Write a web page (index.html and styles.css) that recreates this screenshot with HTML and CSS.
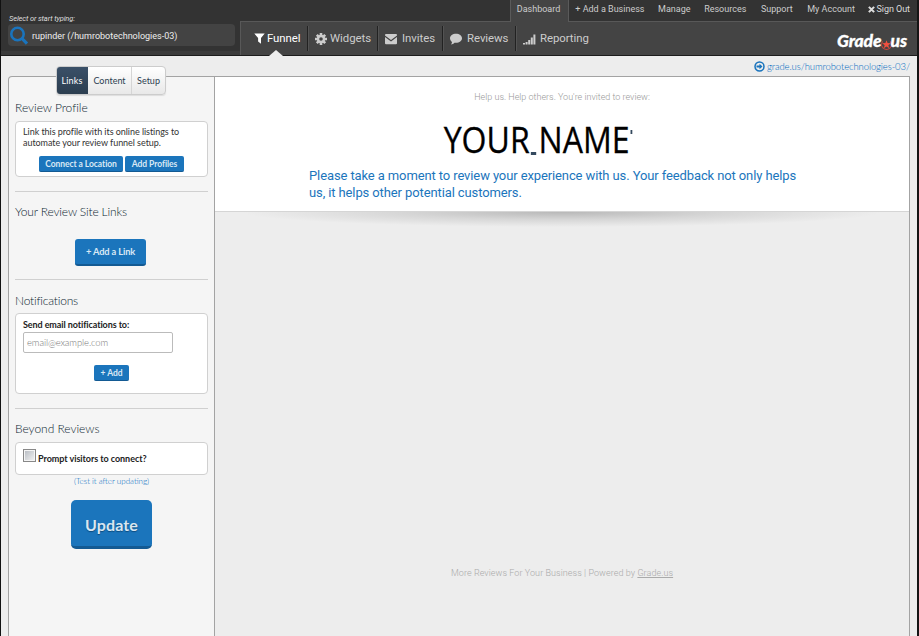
FILE: index.html
```html
<!DOCTYPE html>
<html lang="en">
<head>
<meta charset="utf-8">
<title>Grade.us</title>
<link rel="stylesheet" href="styles.css">
</head>
<body>
<div class="app">
  <header class="header">
    <div class="finder">
      <label class="finder-label" for="profile">Select or start typing:</label>
      <div class="finder-box" id="profile">
        <svg class="search" viewBox="0 0 20 20"><circle cx="8.5" cy="8" r="6.2" fill="none" stroke="#1a74bd" stroke-width="2.6"/><path d="M13 12.5l5 5.2" stroke="#1a74bd" stroke-width="3.2"/></svg>
        <span class="finder-text">rupinder (/humrobotechnologies-03)</span>
      </div>
    </div>
    <div class="bars">
      <nav class="topnav">
        <a class="current"><span>Dashboard</span></a>
        <a><span>+ Add a Business</span></a>
        <a><span>Manage</span></a>
        <a><span>Resources</span></a>
        <a><span>Support</span></a>
        <a><span>My Account</span></a>
        <a class="out"><svg viewBox="0 0 8 8"><path d="M1 1l6 6M7 1L1 7" stroke="#ddd" stroke-width="2.4"/></svg><span>Sign Out</span></a>
      </nav>
      <div class="mainbar">
        <nav class="tabs">
          <a class="tab funnel active"><svg viewBox="0 0 11 11"><path fill="#fff" d="M.3.5h10.4L7 5v5.8L4.1 8.4V5z"/></svg><span>Funnel</span></a>
          <a class="tab widgets"><svg viewBox="0 0 12 12"><g stroke="#ccc" stroke-width="2.6"><path d="M6 0v12M0 6h12M1.8 1.8l8.4 8.4M10.2 1.8l-8.4 8.4"/></g><circle cx="6" cy="6" r="4.2" fill="#ccc"/><circle cx="6" cy="6" r="1.8" fill="#444"/></svg><span>Widgets</span></a>
          <a class="tab invites"><svg viewBox="0 0 12 11"><path fill="#ccc" d="M1 .5h10q1 0 1 1v.6L6 6.4 0 2.1v-.6q0-1 1-1zM0 3.6l6 4.3 6-4.3v6.2q0 1-1 1H1q-1 0-1-1z"/></svg><span>Invites</span></a>
          <a class="tab reviews"><svg viewBox="0 0 12 12"><path fill="#ccc" d="M6 .8c3.400 0 6 2 6 4.500S9.400 9.800 6 9.800c-.6 0-1 0-1.500-.1C3.600 10.700 2.400 11.300 1 11.400c.6-.7 1-1.500 1-2.500C.8 8.100 0 6.800 0 5.300 0 2.800 2.600.8 6 .8z"/></svg><span>Reviews</span></a>
          <a class="tab reporting"><svg viewBox="0 0 13 12"><path fill="#ccc" d="M0 10h2v1.500H0zM2.600 9h2v2.500h-2zM5.200 7h2v4.500h-2zM7.800 4.500h2v7h-2zM10.400 1.500h2v10h-2z"/></svg><span>Reporting</span></a>
        </nav>
        <div class="logo"><span>Grade</span><svg viewBox="0 0 10 12"><path d="M1.500 3.200a4.500 4.500 0 1 0 7 0" fill="none" stroke="#c9473d" stroke-width="1"/><path fill="#f0503f" d="M5 2l1 2.700 3 .1-2.300 1.800.9 2.900L5 7.800 2.400 9.500l.9-2.900L1 4.800l3-.1z"/></svg><span>us</span></div>
      </div>
    </div>
  </header>

  <div class="urlrow"><a class="url"><svg viewBox="0 0 11 11"><circle cx="5.500" cy="5.500" r="4.500" fill="none" stroke="#1a74bd" stroke-width="1.500"/><path d="M2.500 4.600h3V2.700l3 2.800-3 2.800V6.400h-3z" fill="#1a74bd"/></svg><span>grade.us/humrobotechnologies-03/</span></a></div>

  <div class="workspace">
    <aside class="sidebar">
      <div class="switch"><a class="on"><span>Links</span></a><a><span>Content</span></a><a><span>Setup</span></a></div>
      <section class="profile">
        <h2>Review Profile</h2>
        <div class="card">
          <p><span class="l1">Link this profile with its online listings to</span><br><span class="l2">automate your review funnel setup.</span></p>
          <div class="row"><button class="btn connect"><span>Connect a Location</span></button><button class="btn addp"><span>Add Profiles</span></button></div>
        </div>
      </section>
      <section class="sites">
        <h2>Your Review Site Links</h2>
        <button class="btn link"><span>+ Add a Link</span></button>
      </section>
      <section class="notify">
        <h2>Notifications</h2>
        <div class="card">
          <label class="strong">Send email notifications to:</label>
          <div class="input"><span>email@example.com</span></div>
          <button class="btn add"><span>+ Add</span></button>
        </div>
      </section>
      <section class="beyond">
        <h2>Beyond Reviews</h2>
        <div class="card"><i class="check"></i><span class="strong">Prompt visitors to connect?</span></div>
        <a class="test"><span>(Test it after updating)</span></a>
        <button class="btn update"><span>Update</span></button>
      </section>
    </aside>
    <main class="preview">
      <div class="hero">
        <p class="invite"><span>Help us. Help others. You're invited to review:</span></p>
        <h1><span class="name">YOUR<i class="dash"></i>NAME</span><i class="tick"></i></h1>
        <p class="message"><span class="m1">Please take a moment to review your experience with us. Your feedback not only helps</span><br><span class="m2">us, it helps other potential customers.</span></p>
      </div>
      <div class="shade"></div>
      <footer><span>More Reviews For Your Business | Powered by <u>Grade.us</u></span></footer>
    </main>
  </div>
</div>
</body>
</html>
```
FILE: styles.css
```css
* { box-sizing: border-box; }
body { margin: 0; font-family: Roboto, sans-serif; background: #ededed; }
h1, h2, p { margin: 0; font-weight: 400; }
a { color: inherit; text-decoration: none; }
span { white-space: nowrap; }
svg { flex: none; display: block; }
.app { width: 919px; height: 636px; overflow: hidden; border-left: 1px solid #111; border-right: 2px solid #151515; display: flex; flex-direction: column; }

.header { height: 56px; flex: none; display: flex; background: #333; border-bottom: 1px solid #1c1c1c; }
.finder { width: 239px; padding: 13px 0 0 7px; border-bottom: 4px solid #3b3b3b; }
.finder-label { display: block; font-size: 7.500px; line-height: 11px; font-style: italic; color: #ddd; padding-left: 1px; letter-spacing: -.13px; }
.finder-box { width: 227px; height: 22px; background: #434343; border-radius: 4px; display: flex; align-items: center; }
.search { width: 20px; height: 20px; margin: 2px 0 0 1px; }
.finder-text { font-size: 9px; color: #eee; margin: 1px 0 0 3px; }
.bars { flex: 1; display: flex; flex-direction: column; }
.topnav { height: 21px; flex: none; display: flex; justify-content: flex-end; font-size: 9px; color: #ccc; line-height: 18px; padding-right: 7px; gap: 13.600px; }
.topnav .current { background: #444; width: 59px; height: 22px; padding-left: 6px; border: solid #5a5a5a; border-width: 0 1px; margin-right: -7px; z-index: 1; }
.out { display: flex; align-items: center; height: 18px; gap: 2px; color: #ddd; margin-left: -1px; letter-spacing: -.05px; }
.out svg { width: 7px; height: 7px; }
.topnav a:nth-child(5) { margin: 0 1px; }
.mainbar { flex: 1; display: flex; justify-content: space-between; background: #444; border: solid #585858; border-width: 1px 0 0 1px; padding: 4px 10px 0 0; }
.tabs { display: flex; height: 25px; font-size: 11.400px; color: #ccc; }
.tab { display: flex; align-items: center; height: 25px; border-right: 1px solid #222; box-shadow: 1px 0 #535353; position: relative; }
.tab:last-child { border: 0; box-shadow: none; }
.tab span { margin-top: -1px; letter-spacing: -.05px; }
.tab svg { width: 12px; height: 12px; }
.funnel { width: 67px; padding-left: 13px; gap: 2px; color: #fff; }
.tab.funnel svg { width: 11px; height: 11px; }
.widgets { width: 70px; padding-left: 7px; gap: 3px; }
.invites { width: 65px; padding-left: 7px; gap: 5px; }
.reviews { width: 73px; padding-left: 7px; gap: 5px; }
.reporting { width: 80px; padding-left: 7px; gap: 4px; }
.tab.reporting svg { width: 13px; }
.funnel::after { content: ""; position: absolute; left: 28px; top: 24px; border: solid transparent; border-width: 0 7px 6px; border-bottom-color: #ededed; }
.logo { display: flex; align-items: center; height: 28px; font: italic 900 17.500px Lato, sans-serif; color: #fff; letter-spacing: -.1px; -webkit-text-stroke: .3px #fff; }
.logo svg { width: 11px; height: 13px; margin: 8px -1px 0 -1px; }

.urlrow { height: 20px; flex: none; display: flex; justify-content: flex-end; padding: 1px 7px 0 0; }
.url { display: flex; align-items: center; gap: 2px; font: 300 9.500px Lato, sans-serif; letter-spacing: -.09px; color: #0068bd; }
.url svg { width: 11px; height: 11px; }

.workspace { flex: 1; display: flex; margin: 0 7px; min-height: 0; }
.sidebar { width: 207px; flex: none; background: #f5f5f5; border: solid #a3a3a3; border-width: 1px 1px 0 1px; border-radius: 4px 0 0 0; padding: 0 6px; font-family: Lato, sans-serif; color: #222; }
.switch { width: 110px; height: 29px; margin: -11px 0 0 41px; display: flex; position: relative; border: 1px solid #ccc; border-radius: 4px; overflow: hidden; background: linear-gradient(#fff, #e8e8e8); box-shadow: 0 1px 1px #ddd; font-size: 9px; line-height: 28px; color: #2c3e50; text-align: center; }
.switch .on { width: 32px; background: linear-gradient(#3a5068, #2c3e50); color: #fff; margin-left: -1px; letter-spacing: .1px; }
.switch a:nth-child(2) { width: 44px; border-right: 1px solid #d5d5d5; }
.switch a:nth-child(3) { flex: 1; }
section h2 { font-size: 12px; font-weight: 300; line-height: 16px; color: #0c1e30; letter-spacing: -.03px; }
.card { background: #fff; border: 1px solid #d0d0d0; border-radius: 4px; }
.btn { display: block; border: 0; padding: 0; background: #1b75bc; border-bottom: 1px solid #135a93; border-radius: 2px; color: #d9e8f5; font: 700 8.500px Lato, sans-serif; letter-spacing: -.06px; height: 16px; text-align: center; }
.profile { height: 97px; border-bottom: 1px solid #d0d0d0; padding-top: 5px; }
.profile h2 { margin-bottom: 5px; }
.profile .card { height: 56px; padding: 4px 7px; }
.card p { font-size: 9px; line-height: 11px; letter-spacing: -.05px; color: #333; }
.row { display: flex; gap: 2px; margin: 8px 0 0 16px; }
.connect { width: 84px; }
.addp { width: 59px; }
.sites { height: 88px; border-bottom: 1px solid #d0d0d0; padding-top: 12px; }
.sites h2 { letter-spacing: -.15px; }
.btn.link { width: 71px; height: 27px; margin: 19px 0 0 60px; border-radius: 3px; border-bottom-width: 2px; font-size: 9.300px; letter-spacing: -.15px; }
.notify { height: 129px; border-bottom: 1px solid #d0d0d0; padding-top: 13px; }
.notify h2 { margin-bottom: 4px; letter-spacing: -.2px; }
.notify .card { height: 81px; padding: 5px 7px; }
.strong { font-size: 9px; font-weight: 700; line-height: 12px; white-space: nowrap; letter-spacing: -.09px; }
.notify .strong { display: block; }
.input { width: 150px; height: 21px; border: 1px solid #bbb; border-radius: 2px; font-size: 9.500px; font-weight: 300; line-height: 20px; color: #777; padding-left: 3px; margin-top: 1px; letter-spacing: -.1px; }
.btn.add { width: 35px; margin: 12px 0 0 71px; }
.beyond { padding-top: 12px; }
.beyond .card { height: 33px; margin-top: 5px; padding: 6px 7px; display: flex; gap: 2px; }
.beyond .strong { padding-top: 4px; letter-spacing: -.05px; }
.check { width: 13px; height: 13px; border: 1px solid #888; background: linear-gradient(135deg, #b4b9c0, #f5f5f5); box-shadow: inset 0 0 0 1px #f5f5f5; }
.test { display: block; text-align: center; font-size: 8px; font-weight: 300; line-height: 13px; color: #0068bd; }
.btn.update { width: 81px; height: 49px; margin: 12px 0 0 56px; border-radius: 5px; border-bottom-width: 3px; font-size: 16px; padding-top: 2px; color: #d9e6f1; letter-spacing: .1px; text-shadow: 0 1px 1px #0d4d80; }

.preview { flex: 1; border: solid #a3a3a3; border-width: 1px 1px 0 0; display: flex; flex-direction: column; }
.hero { height: 135px; background: #fff; border-bottom: 1px solid #d5d5d5; }
.invite { text-align: center; padding-top: 12px; line-height: 16px; font-size: 9px; font-weight: 300; color: #999; }
h1 { display: flex; justify-content: center; font: 400 36px/42px "Open Sans", sans-serif; color: #000; margin-top: 14px; padding-right: 54px; transform: scaleX(.89); -webkit-text-stroke: .3px #000; }
.name { display: flex; align-items: flex-start; }
.dash { width: 6px; height: 3px; background: #34495e; margin: 33px 3px 0 1px; }
.tick { width: 2px; height: 4px; background: #34495e; margin: 11px 0 0 1px; }
.message { margin: 6px 0 0 94px; font-size: 13px; line-height: 17px; color: #1b75bc; letter-spacing: -.11px; }
.shade { height: 16px; background: radial-gradient(ellipse 46% 15px at 50% 0, #b8b8b8, #d6d6d6 50%, #ededed); }
footer { text-align: center; font-size: 9px; font-weight: 300; color: #aaa; margin-top: 338px; line-height: 14px; letter-spacing: .07px; }
```
